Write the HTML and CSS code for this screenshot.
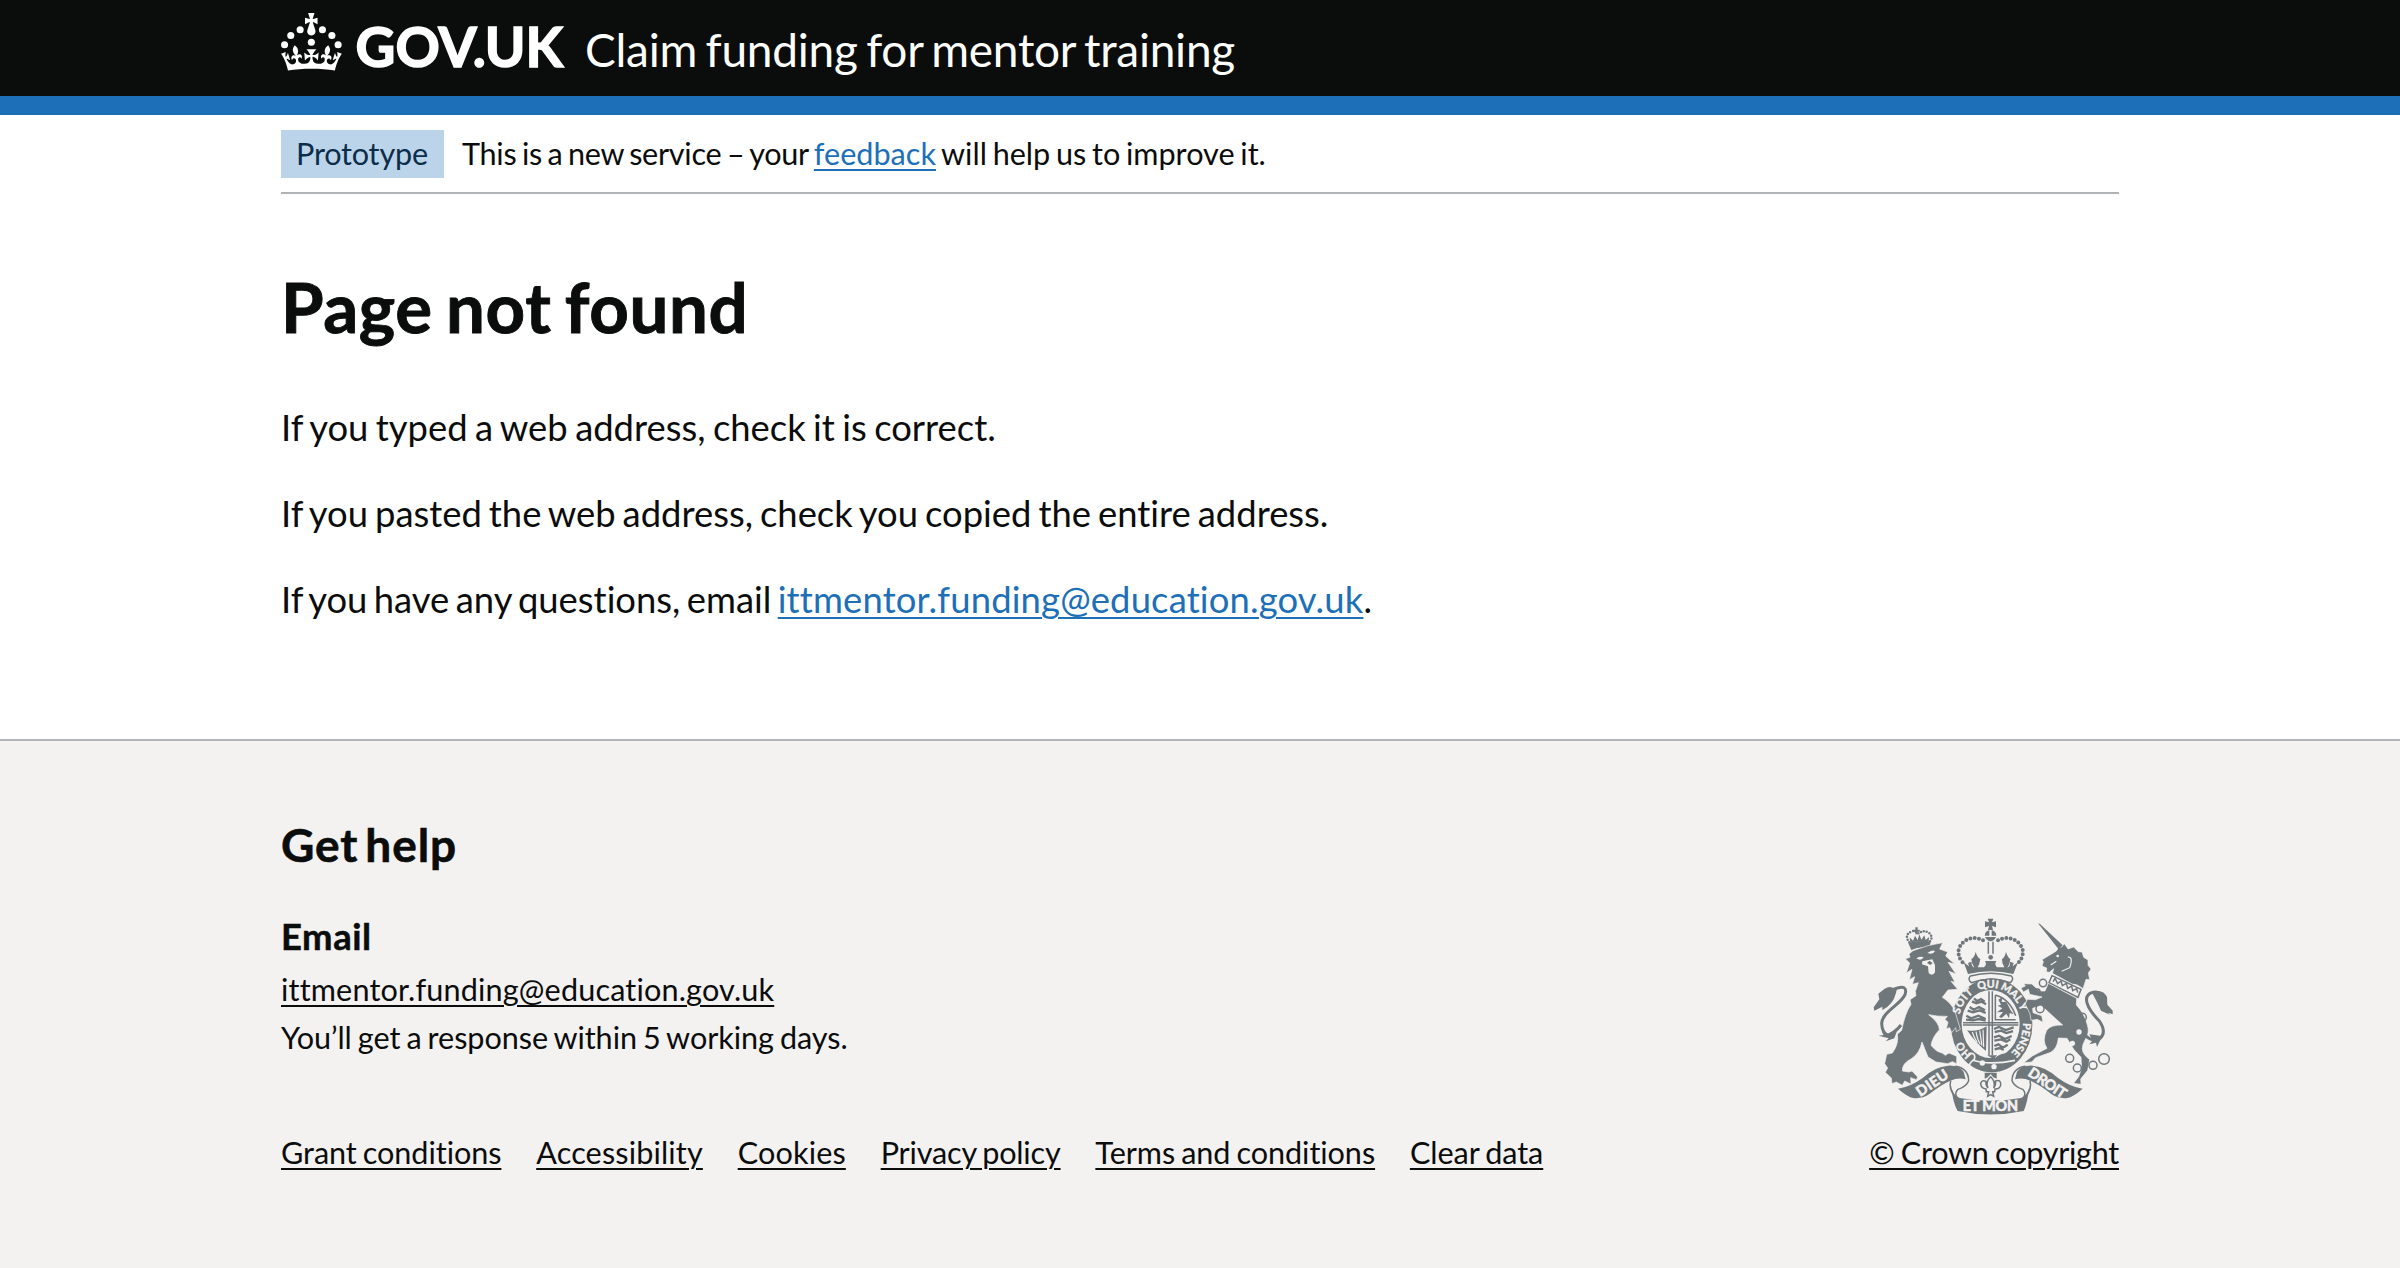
FILE: index.html
```
<!DOCTYPE html>
<html lang="en">
<head>
<meta charset="utf-8">
<title>Page not found - Claim funding for mentor training</title>
<link rel="stylesheet" href="styles.css">
</head>
<body>
<header class="header">
  <div class="container header-inner">
    <svg class="logo" viewBox="0 0 300 60" role="img" aria-label="GOV.UK">
      <circle cx="20" cy="17.6" r="3.7"/><circle cx="10.2" cy="23.5" r="3.7"/><circle cx="3.7" cy="33.2" r="3.7"/><circle cx="31.7" cy="30.6" r="3.7"/><circle cx="43.3" cy="17.6" r="3.7"/><circle cx="53.2" cy="23.5" r="3.7"/><circle cx="59.7" cy="33.2" r="3.7"/>
      <path d="M33.1,9.8c.2-.1.3-.3.5-.5l4.6,2.4v-6.8l-4.6,1.5c-.1-.2-.3-.3-.5-.5l1.9-5.9h-6.7l1.9,5.9c-.2.1-.3.3-.5.5l-4.6-1.5v6.8l4.6-2.4c.1.2.3.3.5.5l-2.6,8c-.9,2.8,1.2,5.7,4.1,5.7h0c3,0,5.1-2.9,4.1-5.7l-2.6-8ZM37,37.9s-3.4,3.8-4.1,6.1c2.2,0,4.2-.5,6.4-2.8l-.7,8.5c-2-2.8-4.4-4.1-5.7-3.8.1,3.1.5,6.7,5.8,7.2,3.7.3,6.7-1.5,7-3.8.4-2.6-2-4.3-3.7-1.6-1.4-4.5,2.4-6.1,4.9-3.2-1.9-4.5-1.8-7.7,2.4-10.9,3,4,2.6,7.3-1.2,11.1,2.4-1.3,6.2,0,4,4.6-1.2-2.8-3.7-2.2-4.2.2-.3,1.7.7,3.7,3,4.2,1.9.3,4.7-.9,7-5.9-1.3,0-2.4.7-3.9,1.7l2.4-8c.6,2.3,1.4,3.7,2.2,4.5.6-1.6.5-2.8,0-5.3l5,1.8c-2.6,3.6-5.2,8.7-7.3,17.5-7.4-1.1-15.7-1.7-24.5-1.7h0c-8.8,0-17.1.6-24.5,1.7-2.1-8.9-4.7-13.9-7.3-17.5l5-1.8c-.5,2.5-.6,3.7,0,5.3.8-.8,1.6-2.3,2.2-4.5l2.4,8c-1.5-1-2.6-1.7-3.9-1.7,2.3,5,5.2,6.2,7,5.9,2.3-.4,3.3-2.4,3-4.2-.5-2.4-3-3.1-4.2-.2-2.2-4.6,1.6-6,4-4.6-3.7-3.7-4.2-7.1-1.2-11.1,4.2,3.2,4.3,6.4,2.4,10.9,2.5-2.8,6.3-1.3,4.9,3.2-1.8-2.7-4.1-1-3.7,1.6.3,2.3,3.3,4.1,7,3.8,5.4-.5,5.7-4.2,5.8-7.2-1.3-.2-3.7,1-5.7,3.8l-.7-8.5c2.2,2.3,4.2,2.7,6.4,2.8-.7-2.3-4.1-6.1-4.1-6.1h10.6,0Z"/>
      <text class="logo-text" x="78" y="56" textLength="217" lengthAdjust="spacingAndGlyphs">GOV.UK</text>
    </svg>
    <span class="service">Claim funding for mentor training</span>
  </div>
</header>

<div class="container">
  <div class="phase">
    <strong class="tag">Prototype</strong>
    <span class="phase-text"><span class="t-tight">This is a new service – your </span><a class="link" href="#">feedback</a><span class="t-mid"> will help us to improve it.</span></span>
  </div>
  <main class="main">
    <h1 class="title">Page not found</h1>
    <p class="body t-first">If you typed a web address, check it is correct.</p>
    <p class="body">If you pasted the web address, check you copied the entire address.</p>
    <p class="body"><span class="t-lead">If you have any questions, email </span><a class="link mail" href="#">ittmentor.funding@education.gov.uk</a>.</p>
  </main>
</div>

<footer class="footer">
  <div class="container footer-inner">
    <div class="footer-main">
      <h2 class="help">Get help</h2>
      <h3 class="sub">Email</h3>
      <p class="foot-line"><a class="foot-link mail" href="#">ittmentor.funding@education.gov.uk</a></p>
      <p class="foot-line t-foot">You’ll get a response within 5 working days.</p>
      <nav class="foot-nav">
        <a class="foot-link t-foot" href="#">Grant conditions</a>
        <a class="foot-link t-open" href="#">Accessibility</a>
        <a class="foot-link t-open" href="#">Cookies</a>
        <a class="foot-link t-priv" href="#">Privacy policy</a>
        <a class="foot-link t-foot" href="#">Terms and conditions</a>
        <a class="foot-link t-foot" href="#">Clear data</a>
      </nav>
    </div>
    <div class="crest-box">
      <svg class="crest" viewBox="40 25 722 590" aria-hidden="true">
        <defs><path id="ring" d="M393 454 A97 110 0 0 1 393 234 A97 110 0 0 1 393 454"/></defs>
        <!-- crown -->
        <path d="M384 27H401L397 38L409 35V53L397 49L400 61H385L388 49L376 53V35L388 38ZM375 78Q377 63 389 62V78ZM396 62Q409 64 410 78H396ZM376 82H409Q403 94 393 95Q382 94 376 82Z"/>
        <path class="beads" d="M370 92C340 76 305 90 297 120Q294 142 309 158M415 92C445 76 480 90 489 120Q492 142 477 158"/>
        <path class="line" d="M386 96V132M400 96V132"/>
        <path d="M312 158L328 170L325 160L336 156Q334 170 344 174Q335 160 335 148Q345 143 348 126Q352 143 362 148Q360 163 354 173L373 173Q383 164 376 154H410Q403 164 412 173L434 173Q426 162 427 148Q436 143 439 126Q443 143 452 148Q451 163 443 174Q453 170 451 156L462 160L459 170L475 158L461 193Q393 176 325 193Z"/>
        <circle cx="393" cy="143" r="7"/>
        <path class="line" d="M332 199Q393 182 455 199Q464 208 452 219Q393 199 335 219Q323 209 332 199Z"/>
        <!-- garter and shield -->
        <ellipse cx="396" cy="347" rx="122" ry="141"/>
        <ellipse class="paper" cx="393" cy="343" rx="87" ry="102"/>
        <!-- lion -->
        <path d="M146 101Q178 89 213 98L209 115Q181 108 155 121Z"/>
        <path class="beads small" d="M149 98Q132 76 155 66Q166 60 177 72Q191 59 207 69Q223 82 209 97"/>
        <path d="M152 100L150 83L160 93L166 78L174 91L179 74L185 90L194 77L198 91L208 82L207 99Q178 92 152 100ZM167 53H174V60H180V66H174V74H167V66H161V60H167Z"/>
        <path class="edge" d="M160 123Q205 105 249 99L240 118L264 127L258 139L285 163L265 158L289 193L268 185L286 218L274 215L294 239L265 241L248 263Q276 280 287 308L302 359L290 366L288 354L276 369L270 354L260 357L265 338L256 329L263 320Q235 321 207 315Q240 340 239 361Q219 380 214 407Q229 427 249 431L257 437L268 430L291 440V462L278 456L264 462L229 457L205 442L187 397Q180 432 154 448Q127 461 128 484L147 487L157 484L174 502L170 510L153 504L154 523L135 514L128 527L110 517L97 522L95 505L77 488L84 475L75 462L81 434L98 430Q118 403 113 374L126 362Q136 310 154 284L151 270L169 258L167 245L176 219L158 224L165 201L149 210L157 179L140 190L150 160L137 147L151 143L148 133Z"/>
        <path class="paper" d="M170 146Q182 139 192 143Q184 156 170 146ZM203 130Q217 119 226 124Q220 137 203 130ZM188 155L218 149L226 166V188Q218 201 207 190L205 170L187 164Z"/>
        <path d="M209 153L219 160L212 166L202 160Z"/>
        <path class="tail" d="M104 238Q146 222 136 255C124 284 68 306 66 341Q67 369 84 377Q107 368 124 346"/>
        <path d="M111 240Q92 226 75 237L56 252L59 269L42 293L44 303L68 291L68 301Q100 286 109 250ZM66 366Q84 381 111 366L104 386L78 395L87 386L57 378L72 376Z"/>
        <g class="ring-text">
          <text><textPath href="#ring" startOffset="86">HO</textPath></text>
          <text><textPath href="#ring" startOffset="231" textLength="78">SOIT</textPath></text>
          <text><textPath href="#ring" startOffset="317">QUI</textPath></text>
          <text><textPath href="#ring" startOffset="388">MAL</textPath></text>
          <text><textPath href="#ring" startOffset="438">Y</textPath></text>
          <text><textPath href="#ring" startOffset="533">PENSE</textPath></text>
        </g>
        <path class="line" d="M388 245V437M398 245V437M310 339H476M310 346H476M407 256V330H468M407 256Q450 268 468 318"/>
        <path class="beasts" d="M343 266L352 274L364 268L375 276M337 275L350 281L366 276L379 284M330 292L342 300L358 292L376 302M324 303L340 308L360 302L378 310M320 318L334 326L356 318L378 328M319 330L340 332L358 328L378 333M403 358L418 352L438 361L462 353M405 367L424 363L440 370L460 364M403 383L418 378L436 388L456 379M404 393L424 389L440 396L452 389M404 409L416 404L430 414L444 405M405 419L420 415L432 421"/>
        <path d="M416 270L428 262L426 277L440 276L452 300L462 314L450 310L448 326L440 312L426 325L418 322L430 307L412 308L428 296L414 288L424 285Z"/>
        <path d="M322 362Q353 368 381 350L379 424Q352 404 322 362Z"/>
        <path class="cut thin" d="M338 367Q345 388 353 398M349 366Q353 390 362 404M360 363L367 408M370 360L372 412"/>
        <path d="M382 437H412L402 448ZM412 440Q430 428 451 432L436 452L404 450Z"/>
        <path class="cut" d="M326 432Q350 427 344 449Q324 462 331 475M338 451Q390 468 466 452"/>
        <circle class="paper" cx="368" cy="460" r="8"/><circle class="paper" cx="403" cy="471" r="8"/>
        <!-- unicorn -->
        <path class="edge" d="M590 124L597 113L606 112L614 102L625 118L642 112L656 126L667 127L672 143L685 151V167L694 178L686 190L690 210L679 209L670 237Q652 222 637 223L578 191L582 177L569 188L560 186L561 175L547 169L551 156L547 150L577 132Z"/>
        <path d="M535 41L541 43L609 107L597 119Z"/>
        <path class="cut thin" d="M573 166L590 155M624 142Q642 140 630 174L606 185"/>
        <circle class="paper" cx="594" cy="139" r="4"/>
        <path class="line" d="M577 198L664 239L655 263L568 219Z"/>
        <path class="line" d="M580 216L586 206L594 222L604 214L608 228L620 221L624 236L636 229L639 243L651 237L654 249"/>
        <path class="edge" d="M566 221L651 266L650 286Q675 312 683 346Q691 370 676 391Q659 420 677 438L690 450L684 482L663 508L664 524L642 521L657 501L666 475L664 443L643 420L622 386L596 385Q593 417 573 428L528 444L516 457L492 459L518 439L562 416Q546 394 561 362Q573 345 609 346L566 307L544 287L519 296L520 309L546 318L550 338L533 329L514 332L511 313L497 283L503 269L527 270L547 262L510 254L506 239L491 247L484 235L497 229L492 222L516 223L540 244L556 244Z"/>
        <path class="tail" d="M676 377Q698 397 719 388Q743 369 719 334C678 292 669 259 696 249Q715 243 729 259"/>
        <path d="M696 247L712 252L721 279L759 312L744 310L752 316L724 303L713 279ZM696 247Q730 236 742 262L743 285L759 303V314L742 308Q708 285 715 258ZM689 374L727 379L718 399L712 412L709 399L689 404L698 393Z"/>
        <g class="chain"><circle cx="550" cy="220" r="11"/><circle cx="541" cy="297" r="12"/><circle cx="533" cy="246" r="8"/><circle cx="668" cy="323" r="12"/><circle cx="630" cy="446" r="12"/><circle cx="653" cy="475" r="12"/><circle cx="700" cy="467" r="12"/><circle cx="733" cy="448" r="16"/></g>
        <circle class="paper" cx="658" cy="367" r="8"/><circle class="paper" cx="638" cy="401" r="8"/>
        <!-- motto scroll -->
        <path d="M115 537Q152 532 189 505Q225 471 265 468Q297 466 312 486L318 509Q296 502 272 513Q242 526 208 554Q187 568 161 565Q145 563 115 537ZM669 537Q632 532 595 505Q559 471 519 468Q487 466 472 486L466 509Q488 502 512 513Q542 526 576 554Q597 568 623 565Q639 563 669 537Z"/>
        <path class="line" d="M286 470Q326 475 327 513Q320 531 295 539Q283 552 292 562M273 513Q267 538 285 559M498 470Q458 475 457 513Q464 531 489 539Q501 552 492 562M511 513Q517 538 499 559"/>
        <path d="M274 527Q279 558 300 565Q392 582 484 565Q505 558 510 527Q503 582 492 604Q392 625 294 604Q280 582 274 527Z"/>
        <g class="motto">
          <text x="392" y="604" textLength="166">ET MON</text>
          <text transform="translate(226 532) rotate(-34)" textLength="106">DIEU</text>
          <text transform="translate(555 532) rotate(34)" textLength="128">DROIT</text>
        </g>
        <path d="M375 489H411V507L401 503L393 493L384 503L375 507Z"/>
        <path class="line" d="M393 501Q409 517 402 535Q410 525 407 514Q425 508 423 527Q419 539 406 538L405 546H399L402 560L393 555L384 560L387 546H380L379 538Q363 536 363 521Q367 509 379 515Q377 526 385 535Q376 517 393 501Z"/>
      </svg>
      <a class="foot-link t-crown" href="#">© Crown copyright</a>
    </div>
  </div>
</footer>
</body>
</html>
```
FILE: styles.css
```
* { box-sizing: border-box; }
body {
  margin: 0;
  min-height: 1268px;
  display: flex;
  flex-direction: column;
  background: #fff;
  color: #0b0c0c;
  font-family: Lato, "Liberation Sans", sans-serif;
  font-variant-ligatures: none;
}
h1, h2, h3, p { margin: 0; }
.container { width: 1838px; margin: 0 auto; }

.header { height: 115px; background: #0b0c0c; border-bottom: 19px solid #1d70b8; color: #fff; }
.header-inner { display: flex; align-items: flex-start; }
.logo { width: 287px; height: 57.4px; margin-top: 13px; fill: #fff; overflow: visible; }
.logo-text { font-family: Lato, sans-serif; font-weight: 700; font-size: 57px; stroke: #fff; stroke-width: 1.6; }
.service { margin: 21px 0 0 17px; font-size: 46px; line-height: 57px; letter-spacing: -.25px; word-spacing: -3px; white-space: nowrap; }

.phase { display: flex; align-items: center; gap: 18px; height: 79px; padding-top: 1px; border-bottom: 2px solid #b1b4b6; font-size: 30.6px; line-height: 38px; }
.tag { width: 163px; height: 48px; padding-left: 15px; background: #bbd4ea; color: #0c2d4a; font-weight: 400; line-height: 47px; letter-spacing: -.2px; }
.phase-text { white-space: pre; }
.t-tight { letter-spacing: -.28px; word-spacing: -2px; }
.t-mid { letter-spacing: 0; word-spacing: -2.1px; }
.link { color: #1d70b8; text-decoration: underline; text-decoration-thickness: 2px; text-underline-offset: 3.5px; }

.main { padding-top: 74px; height: 545px; }
.title { margin-bottom: 58px; font-size: 69px; line-height: 77px; font-weight: 700; letter-spacing: .6px; word-spacing: -4px; -webkit-text-stroke: .9px; }
.body { margin-bottom: 38.2px; font-size: 36.4px; line-height: 48px; word-spacing: -2.3px; white-space: nowrap; }
.t-first { word-spacing: -1.9px; }
.t-lead { word-spacing: -2.9px; }
.mail { letter-spacing: .16px; }

.footer { flex: 1; border-top: 2px solid #b1b4b6; background: #f3f2f1; }
.footer-inner { display: flex; justify-content: space-between; align-items: flex-start; }
.footer-main { padding-top: 75px; }
.help { margin-bottom: 39px; font-size: 46px; line-height: 57px; font-weight: 700; letter-spacing: .9px; word-spacing: -5px; -webkit-text-stroke: .6px; }
.sub { font-size: 36.4px; line-height: 48px; margin-bottom: 6px; letter-spacing: .6px; -webkit-text-stroke: .5px; }
.foot-line { font-size: 30.6px; line-height: 48px; }
.foot-link { color: #0b0c0c; font-size: 30.6px; line-height: 38px; text-decoration: underline; text-decoration-thickness: 2px; text-underline-offset: 3.5px; white-space: nowrap; }
.foot-nav { display: flex; gap: 34.8px; margin-top: 72px; }
.t-foot { letter-spacing: -.06px; word-spacing: -1.7px; }
.t-open { letter-spacing: .15px; }
.t-priv { letter-spacing: -.18px; word-spacing: -1.7px; }
.t-crown { letter-spacing: -.28px; word-spacing: -1px; }
.crest-box { display: flex; flex-direction: column; align-items: flex-end; padding-top: 177px; }
.crest { width: 240.7px; height: 196.7px; margin: 0 5px 19px 0; fill: #6f777b; }
.paper { fill: #f3f2f1; }
.line, .beasts, .tail, .chain { fill: none; stroke: #6f777b; stroke-width: 4.5; }
.beasts { stroke-width: 7; }
.tail { stroke-width: 9; }
.beads { fill: none; stroke: #6f777b; stroke-width: 12; stroke-linecap: round; stroke-dasharray: 0 13; }
.small { stroke-width: 7.5; stroke-dasharray: 0 9; }
.cut { fill: none; stroke: #f3f2f1; stroke-width: 5; }
.thin { stroke-width: 3.5; }
.edge { stroke: #f3f2f1; stroke-width: 2; }
.ring-text, .motto { fill: #f3f2f1; stroke: #f3f2f1; font-family: Lato, sans-serif; font-weight: 700; text-anchor: middle; }
.ring-text { font-size: 32px; stroke-width: 1.2; }
.motto { font-size: 43px; stroke-width: 1.8; }
```
